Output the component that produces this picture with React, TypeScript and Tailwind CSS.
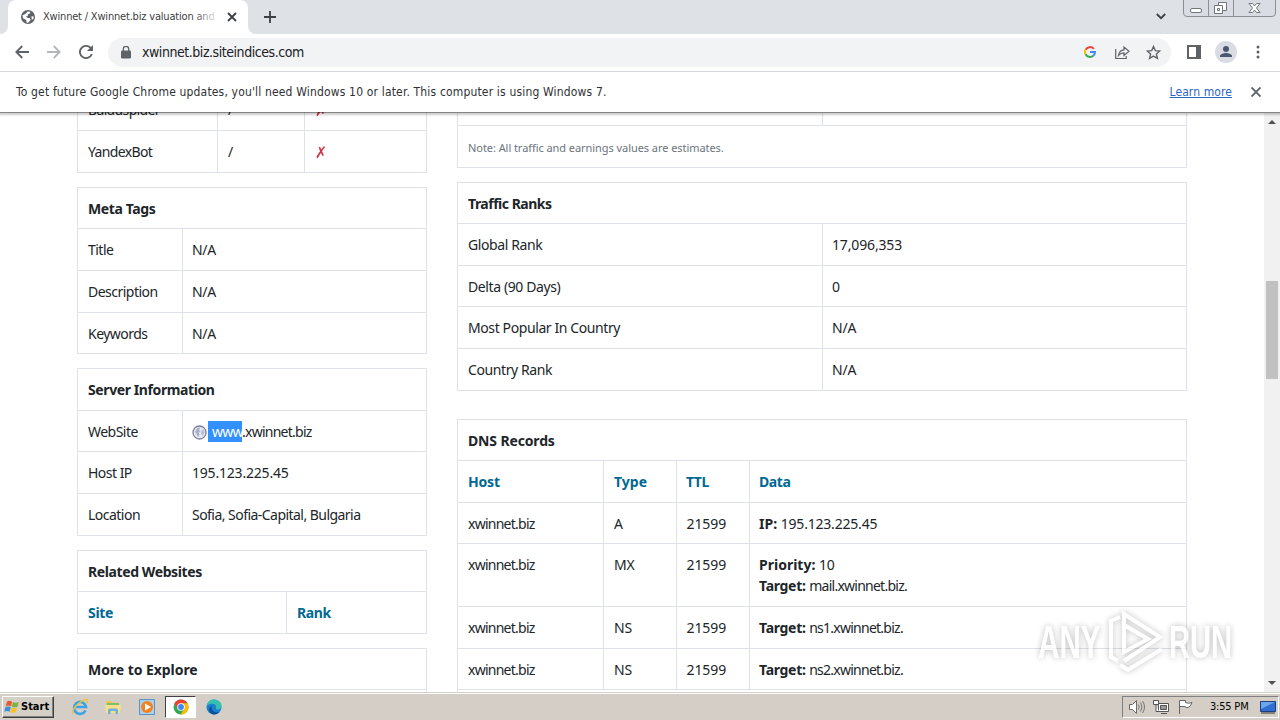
import React from 'react';

import { clsx } from 'clsx';

type RowProps = {
  height: string;
  children: React.ReactNode;
};

function Row({ height, children }: RowProps) {
  return <div className={clsx('flex border-b border-[#dee2e6]', height)}>{children}</div>;
}

type CellProps = {
  width?: string;
  className?: string;
  children?: React.ReactNode;
};

function Cell({ width, className, children }: CellProps) {
  return (
    <div
      className={clsx(
        'shrink-0 border-r border-[#dee2e6] px-[10px] pt-[10px] whitespace-nowrap',
        width,
        className,
      )}
    >
      {children}
    </div>
  );
}

type HeadingProps = {
  height: string;
  tracking?: string;
  children: React.ReactNode;
};

function Heading({ height, tracking = 'tracking-[-0.4px]', children }: HeadingProps) {
  return (
    <Row height={height}>
      <div className={clsx('px-[10px] pt-[10px] font-bold whitespace-nowrap', tracking)}>
        {children}
      </div>
    </Row>
  );
}

function Table({ className, children }: { className?: string; children: React.ReactNode }) {
  return <div className={clsx('border-x border-t border-[#dee2e6]', className)}>{children}</div>;
}

function LastCell({ children, className }: { children?: React.ReactNode; className?: string }) {
  return <div className={clsx('px-[9px] pt-[10px] whitespace-nowrap', className)}>{children}</div>;
}

type PairRowProps = {
  height: string;
  label: string;
  value: React.ReactNode;
  tracking?: string;
};

function PairRow({ height, label, value, tracking = 'tracking-[-0.3px]' }: PairRowProps) {
  return (
    <Row height={height}>
      <Cell width="w-[105px]" className="tracking-[-0.52px]">
        {label}
      </Cell>
      <LastCell className={tracking}>{value}</LastCell>
    </Row>
  );
}

function RankRow({ height, label, value }: { height: string; label: string; value: string }) {
  return (
    <Row height={height}>
      <Cell width="w-[365px]" className="tracking-[-0.4px]">
        {label}
      </Cell>
      <LastCell className="tracking-[-0.15px]">{value}</LastCell>
    </Row>
  );
}

function BotRow({ height, name }: { height: string; name: string }) {
  return (
    <Row height={height}>
      <Cell width="w-[140px]" className="tracking-[-0.65px]">
        {name}
      </Cell>
      <Cell width="w-[87px]">/</Cell>
      <LastCell className="pt-[11px] pl-[10px] font-['DejaVu_Sans',sans-serif] text-[16px] font-bold text-[#cf3545]">
        <span className="inline-block origin-left scale-x-90">✗</span>
      </LastCell>
    </Row>
  );
}

function DnsRow({
  height,
  type,
  children,
}: {
  height: string;
  type: string;
  children: React.ReactNode;
}) {
  return (
    <Row height={height}>
      <Cell width="w-[146px]" className="tracking-[-0.75px]">
        xwinnet.biz
      </Cell>
      <Cell width="w-[73px]" className="tracking-[-0.2px]">
        {type}
      </Cell>
      <Cell width="w-[73px]" className="pl-[9.500px] tracking-[-0.1px]">
        21599
      </Cell>
      <LastCell>{children}</LastCell>
    </Row>
  );
}

function Target({ host }: { host: string }) {
  return (
    <>
      <b className="tracking-[-0.3px]">Target:</b>{' '}
      <span className="tracking-[-0.75px]">{host}</span>
    </>
  );
}

function GlobeIcon({ className }: { className?: string }) {
  return (
    <svg className={className} viewBox="0 0 16 16">
      <circle cx="8" cy="8" r="7" fill="#5f6368" />
      <path d="M2.6 6.2 6 4.4l1.6-2 2.8.3-.6 1.8-2.2 1 .4 1.4-2.2.6 2 1.6 2.2.2.6 1.6-2.4 2.9H6.6L6.2 11 3 9.2z" fill="#fff" />
      <path d="m11.4 7.2 2.4.2-.6 2.8-1.4.2z" fill="#fff" />
    </svg>
  );
}

function TabStrip() {
  return (
    <div className="flex h-[34px] bg-[#dee1e6]">
      <div className="w-2 bg-white">
        <div className="h-full rounded-br-lg bg-[#dee1e6]" />
      </div>
      <div className="flex w-60 items-center rounded-t-lg bg-white pl-3">
        <GlobeIcon className="size-4" />
        <span className="relative ml-[7px] w-[174px] overflow-hidden pt-px text-[11px] tracking-[-0.19px] whitespace-nowrap text-[#3c4043]">
          Xwinnet / Xwinnet.biz valuation and
          <span className="absolute inset-y-0 right-0 w-6 bg-linear-to-r from-white/0 to-white/90" />
        </span>
        <svg className="ml-[10px] size-[10px]" viewBox="0 0 10 10" stroke="#3c4043" strokeWidth="1.8">
          <path d="m1 1 8 8M9 1 1 9" />
        </svg>
      </div>
      <div className="w-2 bg-white">
        <div className="h-full rounded-bl-lg bg-[#dee1e6]" />
      </div>
      <svg className="mt-[11px] ml-2 size-3" viewBox="0 0 12 12" stroke="#3c4043" strokeWidth="1.8">
        <path d="M6 0v12M0 6h12" />
      </svg>
      <svg className="mt-[13px] ml-auto h-[7px] w-[10px]" viewBox="0 0 10 7" fill="none" stroke="#3c4043" strokeWidth="1.8">
        <path d="m.8 1 4.2 4.2L9.200 1" />
      </svg>
      <WindowButtons />
    </div>
  );
}

function WindowButtons() {
  return (
    <svg className="mr-1 ml-[17px] h-[18px] w-[93px]" viewBox="0 0 93 18" fill="none" stroke="#70757c">
      <path d="M.5 0v13q0 3.500 3.500 3.500h85q3.500 0 3.500-3.500V0M25.500 0v16M50.500 0v16" fill="#d9dce2" stroke="#8b9097" />
      <rect x="7.500" y="8.500" width="11" height="4" rx="1.500" fill="#fff" />
      <path d="M35.500 2.500h8v8h-8z" fill="#fff" />
      <path d="M31.500 5.500h8v8h-8z" fill="#fff" />
      <path d="M34.500 8.500h2v2h-2z" />
      <path d="M66 3.500h3.500l2 2.500 2-2.500H77L73.500 8l3.500 4.500h-3.500l-2-2.500-2 2.500H66L69.500 8z" fill="#fff" />
    </svg>
  );
}

function AddressBar() {
  return (
    <div className="flex h-[38px] items-center border-b border-[#d5d7da] bg-white pb-px">
      <svg className="ml-[15px] size-[14px]" viewBox="0 0 14 14" fill="none" stroke="#5f6368" strokeWidth="1.8">
        <path d="M14 7H1.500M7.300 1 1.300 7l6 6" />
      </svg>
      <svg className="ml-[18px] size-[14px]" viewBox="0 0 14 14" fill="none" stroke="#b4b6b9" strokeWidth="1.8">
        <path d="M0 7h12.500M6.700 1l6 6-6 6" />
      </svg>
      <svg className="ml-[18px] size-[14px]" viewBox="0 0 14 14" fill="none" stroke="#5f6368" strokeWidth="1.900">
        <path d="M11.800 3.200A6.100 6.100 0 1 0 12.800 9" />
        <path d="M14 0v6H8z" fill="#5f6368" stroke="none" />
      </svg>
      <div className="ml-[15px] flex h-[29px] w-[1063px] items-center rounded-full bg-[#f1f3f4]">
        <svg className="ml-[13px] h-[13px] w-[10px]" viewBox="0 0 10 13">
          <rect y="4.500" width="10" height="8" rx="1.200" fill="#5f6368" />
          <path d="M2.300 5V3a2.700 2.700 0 0 1 5.400 0v2" fill="none" stroke="#5f6368" strokeWidth="1.300" />
        </svg>
        <span className="ml-[11px] pt-px text-[14px] tracking-[-0.45px] whitespace-nowrap text-[#202124]">
          xwinnet.biz.siteindices.com
        </span>
        <svg className="ml-auto size-3" viewBox="0 0 12 12" fill="none" strokeWidth="2">
          <path d="M9.800 2.800A5 5 0 0 0 1.600 3.800" stroke="#ea4335" />
          <path d="M1.600 3.600a5 5 0 0 0 0 4.800" stroke="#fbbc05" />
          <path d="M1.600 8.200A5 5 0 0 0 9.300 9.700" stroke="#34a853" />
          <path d="M9.200 9.800A5 5 0 0 0 11 6H6" stroke="#4285f4" />
        </svg>
        <svg className="ml-[18px] h-[15px] w-4" viewBox="0 0 16 15" fill="none" stroke="#5f6368" strokeWidth="1.200">
          <path d="M1.700 4v9.500h10.500V11" />
          <path d="M4.500 10.500c.5-4 2.500-5.500 5.500-5.700V2l5 4.300-5 4.200V7.800C7.700 7.800 6 8.500 4.500 10.500z" />
        </svg>
        <svg className="mr-[10px] ml-4 size-[15px]" viewBox="0 0 15 15" fill="none" stroke="#5f6368" strokeWidth="1.400">
          <path d="m7.500 1.500 1.800 4.100 4.500.4-3.400 3 1 4.400-3.900-2.300-3.900 2.300 1-4.400-3.400-3 4.500-.4z" />
        </svg>
      </div>
      <svg className="ml-4 h-[14px] w-[14px]" viewBox="0 0 14 14">
        <path d="M1 1h12v12H1z" fill="none" stroke="#5f6368" strokeWidth="2" />
        <path d="M9 1h4v12H9z" fill="#5f6368" />
      </svg>
      <svg className="ml-[14px] size-[22px]" viewBox="0 0 22 22">
        <circle cx="11" cy="11" r="11" fill="#d9dce2" />
        <circle cx="11" cy="8" r="3" fill="#4b5670" />
        <path d="M5 16v-1c0-2 4-3 6-3s6 1 6 3v1z" fill="#4b5670" />
      </svg>
      <svg className="ml-[19px] h-[14px] w-[4px]" viewBox="0 0 4 14" fill="#5f6368">
        <circle cx="2" cy="2" r="1.500" />
        <circle cx="2" cy="7" r="1.500" />
        <circle cx="2" cy="12" r="1.500" />
      </svg>
    </div>
  );
}

function UpdateBar() {
  return (
    <div className="relative z-10 flex h-10 items-center bg-white pl-4 text-[12px] text-[#303134] shadow-[0_1px_0_rgba(0,0,0,0.35),0_2px_2px_1px_rgba(0,0,0,0.2)] [clip-path:inset(0_0_-8px_0)]">
      <span className="tracking-[0.165px] whitespace-nowrap">
        To get future Google Chrome updates, you&apos;ll need Windows 10 or later. This computer is using Windows 7.
      </span>
      <a className="ml-auto tracking-[0.1px] whitespace-nowrap text-[#2b66c4] underline">Learn more</a>
      <svg className="mr-[19px] ml-[19px] size-[10px]" viewBox="0 0 10 10" stroke="#5f6368" strokeWidth="1.900">
        <path d="m.5.5 9 9M9.500.5l-9 9" />
      </svg>
    </div>
  );
}

function LeftColumn() {
  return (
    <div className="-mt-6 flex w-[350px] flex-col">
      <div className="border-x border-[#dee2e6]">
        <BotRow height="h-[42px]" name="Baiduspider" />
        <BotRow height="h-[42px]" name="YandexBot" />
      </div>

      <Table className="mt-[14px]">
        <Heading height="h-[41px]">Meta Tags</Heading>
        <PairRow height="h-[42px]" label="Title" value="N/A" />
        <PairRow height="h-[42px]" label="Description" value="N/A" />
        <PairRow height="h-[41px]" label="Keywords" value="N/A" />
      </Table>

      <Table className="mt-[14px]">
        <Heading height="h-[42px]">Server Information</Heading>
        <PairRow
          height="h-[41px]"
          label="WebSite"
          tracking="tracking-[-0.75px]"
          value={
            <span className="flex">
              <svg className="mt-[4px] mr-[1px] size-[15px]" viewBox="0 0 15 15">
                <circle cx="7.500" cy="7.500" r="6.500" fill="#e4e8f2" stroke="#7b809c" strokeWidth="1.300" />
                <path d="M3 6.500 5.500 3l3-.5L7 5l1.500 1.500-2 1L7.500 10 6 12 4.500 9z" fill="#a9b1ca" />
                <path d="m9.500 5 2-.5 1 3-2 3.500-1.500-2.500z" fill="#b9c0d6" />
              </svg>
              <span className="w-[34px] bg-[#3390ff] pl-1 text-white">www</span>
              <span>.xwinnet.biz</span>
            </span>
          }
        />
        <PairRow height="h-[42px]" label="Host IP" value="195.123.225.45" tracking="tracking-[-0.2px]" />
        <PairRow
          height="h-[42px]"
          label="Location"
          value="Sofia, Sofia-Capital, Bulgaria"
          tracking="tracking-[-0.54px]"
        />
      </Table>

      <Table className="mt-[14px]">
        <Heading height="h-[41px]">Related Websites</Heading>
        <Row height="h-[42px]">
          <Cell width="w-[209px]" className="font-bold tracking-[-0.3px] text-[#006892]">
            Site
          </Cell>
          <LastCell className="pl-[10px] font-bold tracking-[-0.4px] text-[#006892]">Rank</LastCell>
        </Row>
      </Table>

      <Table className="mt-[14px]">
        <Heading height="h-[41px]" tracking="tracking-[-0.05px]">
          More to Explore
        </Heading>
        <Row height="h-[42px]">
          <LastCell />
        </Row>
      </Table>
    </div>
  );
}

function RightColumn() {
  return (
    <div className="flex w-[730px] flex-col">
      <div className="border-x border-[#dee2e6]">
        <Row height="h-[13px]">
          <Cell width="w-[365px]" />
        </Row>
        <Row height="h-[42px]">
          <div className="px-[10px] pt-[11px] text-[11px] tracking-[-0.06px] text-[#6c757d]">
            Note: All traffic and earnings values are estimates.
          </div>
        </Row>
      </div>

      <Table className="mt-[14px]">
        <Heading height="h-[41px]" tracking="tracking-[-0.5px]">
          Traffic Ranks
        </Heading>
        <RankRow height="h-[42px]" label="Global Rank" value="17,096,353" />
        <RankRow height="h-[41px]" label="Delta (90 Days)" value="0" />
        <RankRow height="h-[42px]" label="Most Popular In Country" value="N/A" />
        <RankRow height="h-[42px]" label="Country Rank" value="N/A" />
      </Table>

      <Table className="mt-[28px]">
        <Heading height="h-[41px]" tracking="tracking-[-0.15px]">
          DNS Records
        </Heading>
        <Row height="h-[42px]">
          <Cell width="w-[146px]" className="font-bold tracking-[-0.2px] text-[#006892]">Host</Cell>
          <Cell width="w-[73px]" className="font-bold text-[#006892]">Type</Cell>
          <Cell width="w-[73px]" className="pl-[9px] font-bold tracking-[-0.5px] text-[#006892]">TTL</Cell>
          <LastCell className="font-bold tracking-[-0.4px] text-[#006892]">Data</LastCell>
        </Row>
        <DnsRow height="h-[41px]" type="A">
          <b>IP:</b> <span className="tracking-[-0.2px]">195.123.225.45</span>
        </DnsRow>
        <DnsRow height="h-[63px]" type="MX">
          <b>Priority:</b> <span className="tracking-[-0.2px]">10</span>
          <br />
          <Target host="mail.xwinnet.biz." />
        </DnsRow>
        <DnsRow height="h-[42px]" type="NS">
          <Target host="ns1.xwinnet.biz." />
        </DnsRow>
        <DnsRow height="h-[41px]" type="NS">
          <Target host="ns2.xwinnet.biz." />
        </DnsRow>
        <Row height="h-[42px]">
          <LastCell />
        </Row>
      </Table>
    </div>
  );
}

function Scrollbar() {
  return (
    <div className="ml-auto flex w-4 flex-col items-center bg-[#f1f1f1]">
      <svg className="mt-[7px] h-1 w-2" viewBox="0 0 8 4" fill="#505050">
        <path d="m4 0 4 4H0z" />
      </svg>
      <div className="mt-[157px] h-[98px] w-3 bg-[#c1c1c1]" />
      <svg className="mt-auto mb-[7px] h-1 w-2" viewBox="0 0 8 4" fill="#505050">
        <path d="M0 0h8L4 4z" />
      </svg>
    </div>
  );
}

function Watermark() {
  return (
    <div className="absolute top-[608px] left-[1038px] flex items-center opacity-65 drop-shadow-[0_0_3px_rgba(0,0,0,0.4)]">
      <span className="w-[68px] pt-[2px] font-['Liberation_Sans',sans-serif] text-[47px] leading-[64px] font-bold text-white">
        <span className="inline-block origin-left scale-x-[0.63]">ANY</span>
      </span>
      <svg className="h-[64px] w-[58px]" viewBox="0 0 58 64" fill="none" stroke="#fff" strokeWidth="4">
        <path d="M14 8 5 12v36l7 4" />
        <path d="M18 43V5l36 23-36 24" />
        <path d="M18 43V16l24 14zM14 56l8 5 34-21" />
      </svg>
      <span className="w-[66px] pt-[2px] pl-[5px] font-['Liberation_Sans',sans-serif] text-[47px] leading-[64px] font-bold text-white">
        <span className="inline-block origin-left scale-x-[0.62]">RUN</span>
      </span>
    </div>
  );
}

function Taskbar() {
  return (
    <div className="flex h-7 items-center border-t border-[#d4d0c8] bg-[#d4cec6] pt-px shadow-[inset_0_1px_0_#fff]">
      <div className="ml-[2px] flex h-[22px] w-[52px] items-center border border-t-white border-r-[#404040] border-b-[#404040] border-l-white bg-[#d4d0c8] pl-px shadow-[inset_-1px_-1px_0_#808080]">
        <svg className="h-4 w-4" viewBox="0 0 16 16">
          <path d="M3 2.500Q5.500 1 8 2.700L7 7.300Q4.500 6 1.700 7.200z" fill="#e8582a" />
          <path d="M8.800 3q2.500 1.300 6 0l-1.300 4.700q-3 1.200-5.700 0z" fill="#7cb342" />
          <path d="M1.500 8q3-1.200 5.300 0l-1.200 4.700Q3 11.500.3 12.700z" fill="#3b8fe0" />
          <path d="M7.500 8.500q3 1.200 5.800 0L12 13q-3 1.300-5.700.2z" fill="#f8c22c" />
        </svg>
        <span className="ml-px text-[11px] font-bold text-black">Start</span>
      </div>
      <svg className="ml-[17px] size-[18px]" viewBox="0 0 18 18" fill="none">
        <path d="M14.500 12.500A6 6 0 1 1 15 9H5" stroke="#3ba4e8" strokeWidth="2.600" />
        <path d="M2 16C-.5 12 9 3 14.500 1.500 17 1 17 3 15.500 5.500" stroke="#f2c23a" strokeWidth="1.400" />
      </svg>
      <svg className="ml-[16px] size-[16px]" viewBox="0 0 16 16">
        <path d="M1 2h5l1 1.500h7V13H1z" fill="#e9c55a" />
        <path d="M2 4h12v3H2z" fill="#7fbf6a" />
        <path d="M0 6h16l-1 8H1z" fill="#f7e08c" />
        <path d="M3 15v-4q0-1.500 1.500-1.500h7Q13 9.500 13 11v4h-2.500v-3h-5v3z" fill="#6fb1dc" />
      </svg>
      <svg className="ml-[18px] size-[16px]" viewBox="0 0 16 16">
        <path d="M.5.5h15v15H.5z" fill="#a9d1ef" stroke="#5b93c8" />
        <circle cx="8" cy="8" r="6" fill="#f58220" />
        <path d="m6 4.500 6 3.500-6 3.500z" fill="#fff" />
      </svg>
      <div className="ml-[10px] flex h-[22px] w-[31px] items-center justify-center border border-t-[#404040] border-r-white border-b-white border-l-[#404040] bg-white">
        <svg className="size-4" viewBox="0 0 16 16">
          <circle cx="8" cy="8" r="7.500" fill="#34a853" />
          <path d="M1.500 4.250A7.500 7.500 0 0 1 14.500 4.250H8L4.800 9.900z" fill="#ea4335" />
          <path d="M14.500 4.250A7.500 7.500 0 0 1 7.600 15.500L11.200 9.900 8 4.250z" fill="#fbbc05" />
          <circle cx="8" cy="8" r="3.800" fill="#fff" />
          <circle cx="8" cy="8" r="2.900" fill="#4285f4" />
        </svg>
      </div>
      <svg className="ml-[10px] size-4" viewBox="0 0 16 16">
        <circle cx="8" cy="8" r="7.500" fill="#1b7fd0" />
        <path d="M.6 7C1.500 2 5 .5 8 .5c4.500 0 7.500 3 7.500 6.500 0 2-1.500 3.500-3.500 3.500-1.500 0-2.500-.7-2-1.500C11 6 8 4.500 5.500 4.700 3 5 1.200 6 .6 7z" fill="#35c0b0" />
        <path d="M6 7c-1.500 4 2 7.500 7.500 6C10 17 4 16 3 11c0-2 1.300-3.500 3-4z" fill="#0c4f9c" />
      </svg>

      <div className="mr-[1px] ml-auto flex h-[22px] w-[157px] items-center border border-t-[#808080] border-r-white border-b-white border-l-[#808080]">
        <svg className="ml-[6px] size-4" viewBox="0 0 16 16" fill="#fff" stroke="#6b6b6b">
          <path d="M.5 5.500h3l4-4v13l-4-4h-3z" />
          <path d="M9.500 5.500q1.500 2.500 0 5M11.500 3.500q3 4.500 0 9M13.500 2q4 6 0 12" fill="none" strokeWidth=".9" />
        </svg>
        <svg className="ml-[8px] size-4" viewBox="0 0 16 16" fill="#fff" stroke="#555">
          <path d="M5.500 4.500h10v8h-10zM8 14.500h6" />
          <path d="M7.500 6.500h6v4h-6z" fill="#999" />
          <path d="M.5 1.500h5v4h-5zM3 5.500v7h3" />
        </svg>
        <svg className="ml-[8px] size-4" viewBox="0 0 16 16" fill="#fff" stroke="#666">
          <path d="M2.500 15V1.500h6v2q3 1.500 6.500 0-1 4-4 5-2 .5-3-1h-5" />
        </svg>
        <span className="ml-[17px] text-[11px] tracking-[-0.2px] whitespace-nowrap text-black">3:55 PM</span>
        <svg className="mr-[2px] ml-auto h-[13px] w-4" viewBox="0 0 16 13">
          <path d="M.5.5h15v10H.5z" fill="#2f6fd0" stroke="#1d3f7e" />
          <path d="M1 1h14L1 8z" fill="#6ba6ef" />
          <path d="M1 11.500h14v1H1z" fill="#333" />
        </svg>
      </div>
    </div>
  );
}

function App() {
  return (
    <div className="relative flex h-[720px] w-[1280px] flex-col overflow-hidden bg-white font-['DejaVu_Sans_Condensed','Noto_Sans',sans-serif]">
      <TabStrip />
      <AddressBar />
      <UpdateBar />
      <div className="flex h-[580px] overflow-hidden pt-px pl-[77px] font-['Noto_Sans',sans-serif] text-[14px] leading-[21px] text-[#212529]">
        <LeftColumn />
        <div className="ml-[30px]">
          <RightColumn />
        </div>
        <Scrollbar />
      </div>
      <Taskbar />
      <Watermark />
    </div>
  );
}

export default App;
